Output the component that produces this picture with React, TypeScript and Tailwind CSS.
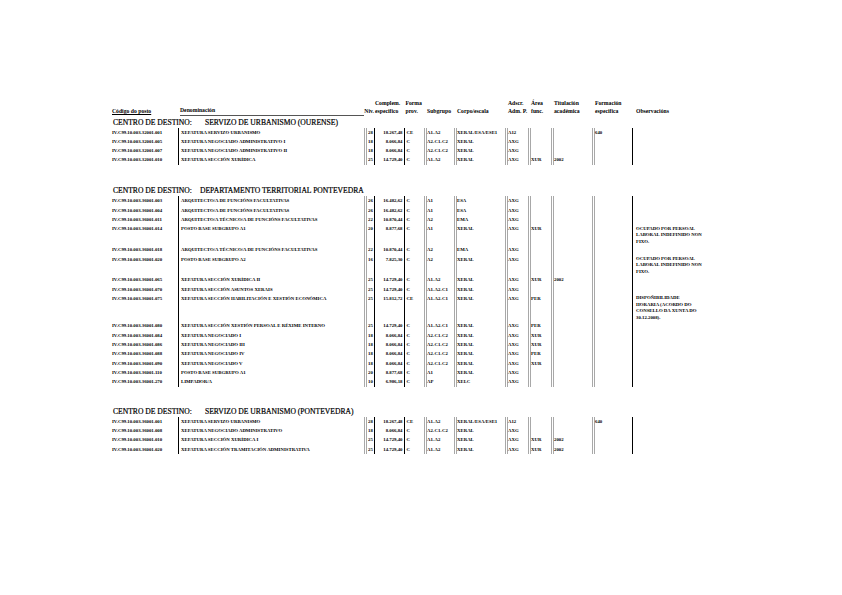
type Row = {
  code: string;
  name: string;
  niv: string;
  comp: string;
  forma: string;
  sub: string;
  corpo: string;
  adscr: string;
  area?: string;
  tit?: string;
  form?: string;
  obs?: string[];
};

type Section = { label: string; gap: string; rows: Row[] };

const OCUPADO = ["OCUPADO POR PERSOAL", "LABORAL INDEFINIDO NON", "FIXO."];

const sections: Section[] = [
  {
    label: "SERVIZO DE URBANISMO (OURENSE)",
    gap: "w-[92px]",
    rows: [
      { code: "IV.C99.10.003.32001.001", name: "XEFATURA SERVIZO URBANISMO", niv: "28", comp: "18.267,48", forma: "CE", sub: "A1-A2", corpo: "XERAL/ESA/ESE1", adscr: "A12", form: "640" },
      { code: "IV.C99.10.003.32001.005", name: "XEFATURA NEGOCIADO ADMINISTRATIVO I", niv: "18", comp: "8.066,84", forma: "C", sub: "A2-C1-C2", corpo: "XERAL", adscr: "AXG" },
      { code: "IV.C99.10.003.32001.007", name: "XEFATURA NEGOCIADO ADMINISTRATIVO II", niv: "18", comp: "8.066,84", forma: "C", sub: "A2-C1-C2", corpo: "XERAL", adscr: "AXG" },
      { code: "IV.C99.10.003.32001.010", name: "XEFATURA SECCIÓN XURÍDICA", niv: "25", comp: "14.729,40", forma: "C", sub: "A1-A2", corpo: "XERAL", adscr: "AXG", area: "XUR", tit: "2002" },
    ],
  },
  {
    label: "DEPARTAMENTO TERRITORIAL PONTEVEDRA",
    gap: "w-[87px]",
    rows: [
      { code: "IV.C99.10.003.36001.003", name: "ARQUITECTO/A DE FUNCIÓNS FACULTATIVAS", niv: "26", comp: "16.482,62", forma: "C", sub: "A1", corpo: "ESA", adscr: "AXG" },
      { code: "IV.C99.10.003.36001.004", name: "ARQUITECTO/A DE FUNCIÓNS FACULTATIVAS", niv: "26", comp: "16.482,62", forma: "C", sub: "A1", corpo: "ESA", adscr: "AXG" },
      { code: "IV.C99.10.003.36001.011", name: "ARQUITECTO/A TÉCNICO/A DE FUNCIÓNS FACULTATIVAS", niv: "22", comp: "10.870,44", forma: "C", sub: "A2", corpo: "EMA", adscr: "AXG" },
      { code: "IV.C99.10.003.36001.014", name: "POSTO BASE SUBGRUPO A1", niv: "20", comp: "8.877,68", forma: "C", sub: "A1", corpo: "XERAL", adscr: "AXG", area: "XUR", obs: OCUPADO },
      { code: "IV.C99.10.003.36001.018", name: "ARQUITECTO/A TÉCNICO/A DE FUNCIÓNS FACULTATIVAS", niv: "22", comp: "10.870,44", forma: "C", sub: "A2", corpo: "EMA", adscr: "AXG" },
      { code: "IV.C99.10.003.36001.020", name: "POSTO BASE SUBGRUPO A2", niv: "16", comp: "7.825,30", forma: "C", sub: "A2", corpo: "XERAL", adscr: "AXG", obs: OCUPADO },
      { code: "IV.C99.10.003.36001.065", name: "XEFATURA SECCIÓN XURÍDICA II", niv: "25", comp: "14.729,40", forma: "C", sub: "A1-A2", corpo: "XERAL", adscr: "AXG", area: "XUR", tit: "2002" },
      { code: "IV.C99.10.003.36001.070", name: "XEFATURA SECCIÓN ASUNTOS XERAIS", niv: "25", comp: "14.729,40", forma: "C", sub: "A1-A2-C1", corpo: "XERAL", adscr: "AXG" },
      { code: "IV.C99.10.003.36001.075", name: "XEFATURA SECCIÓN HABILITACIÓN E XESTIÓN ECONÓMICA", niv: "25", comp: "15.812,72", forma: "CE", sub: "A1-A2-C1", corpo: "XERAL", adscr: "AXG", area: "PER", obs: ["DISPOÑIBILIDADE", "HORARIA (ACORDO DO", "CONSELLO DA XUNTA DO", "30.12.2008)."] },
      { code: "IV.C99.10.003.36001.080", name: "XEFATURA SECCIÓN XESTIÓN PERSOAL E RÉXIME INTERNO", niv: "25", comp: "14.729,40", forma: "C", sub: "A1-A2-C1", corpo: "XERAL", adscr: "AXG", area: "PER" },
      { code: "IV.C99.10.003.36001.084", name: "XEFATURA NEGOCIADO I", niv: "18", comp: "8.066,84", forma: "C", sub: "A2-C1-C2", corpo: "XERAL", adscr: "AXG", area: "XUR" },
      { code: "IV.C99.10.003.36001.086", name: "XEFATURA NEGOCIADO III", niv: "18", comp: "8.066,84", forma: "C", sub: "A2-C1-C2", corpo: "XERAL", adscr: "AXG", area: "XUR" },
      { code: "IV.C99.10.003.36001.088", name: "XEFATURA NEGOCIADO IV", niv: "18", comp: "8.066,84", forma: "C", sub: "A2-C1-C2", corpo: "XERAL", adscr: "AXG", area: "PER" },
      { code: "IV.C99.10.003.36001.090", name: "XEFATURA NEGOCIADO V", niv: "18", comp: "8.066,84", forma: "C", sub: "A2-C1-C2", corpo: "XERAL", adscr: "AXG", area: "XUR" },
      { code: "IV.C99.10.003.36001.110", name: "POSTO BASE SUBGRUPO A1", niv: "20", comp: "8.877,68", forma: "C", sub: "A1", corpo: "XERAL", adscr: "AXG" },
      { code: "IV.C99.10.003.36001.270", name: "LIMPADOR/A", niv: "10", comp: "6.986,18", forma: "C", sub: "AP", corpo: "XELC", adscr: "AXG" },
    ],
  },
  {
    label: "SERVIZO DE URBANISMO (PONTEVEDRA)",
    gap: "w-[92px]",
    rows: [
      { code: "IV.C99.10.003.36001.001", name: "XEFATURA SERVIZO URBANISMO", niv: "28", comp: "18.267,48", forma: "CE", sub: "A1-A2", corpo: "XERAL/ESA/ESE1", adscr: "A12", form: "640" },
      { code: "IV.C99.10.003.36001.008", name: "XEFATURA NEGOCIADO ADMINISTRATIVO", niv: "18", comp: "8.066,84", forma: "C", sub: "A2-C1-C2", corpo: "XERAL", adscr: "AXG" },
      { code: "IV.C99.10.003.36001.010", name: "XEFATURA SECCIÓN XURÍDICA I", niv: "25", comp: "14.729,40", forma: "C", sub: "A1-A2", corpo: "XERAL", adscr: "AXG", area: "XUR", tit: "2002" },
      { code: "IV.C99.10.003.36001.020", name: "XEFATURA SECCIÓN TRAMITACIÓN ADMINISTRATIVA", niv: "25", comp: "14.729,40", forma: "C", sub: "A1-A2", corpo: "XERAL", adscr: "AXG", area: "XUR", tit: "2002" },
    ],
  },
];

function HeaderRow() {
  return (
    <div className="flex whitespace-nowrap text-[5.7px] font-bold leading-[8px]">
      <div className="flex w-[66px] shrink-0 flex-col">
        <span>&nbsp;</span>
        <span className="underline">Código do posto</span>
      </div>
      <div className="flex w-[186px] shrink-0 flex-col pl-[2px]">
        <span>&nbsp;</span>
        <span className="border-b border-[#555] leading-[7.5px]">Denominación</span>
      </div>
      <div className="flex w-[10px] shrink-0 flex-col items-end">
        <span>&nbsp;</span>
        <span>Niv.</span>
      </div>
      <div className="flex w-[30px] shrink-0 flex-col pl-[1px]">
        <span>Complem.</span>
        <span>especifico</span>
      </div>
      <div className="flex w-[20px] shrink-0 flex-col pl-[1.5px]">
        <span>Forma</span>
        <span>prov.</span>
      </div>
      <div className="flex w-[30px] shrink-0 flex-col pl-[3px]">
        <span>&nbsp;</span>
        <span>Subgrupo</span>
      </div>
      <div className="flex w-[51px] shrink-0 flex-col pl-[3px]">
        <span>&nbsp;</span>
        <span>Corpo/escala</span>
      </div>
      <div className="flex w-[23px] shrink-0 flex-col pl-[3px]">
        <span>Adscr.</span>
        <span>Adm. P.</span>
      </div>
      <div className="flex w-[23px] shrink-0 flex-col pl-[3px]">
        <span>Área</span>
        <span>func.</span>
      </div>
      <div className="flex w-[41px] shrink-0 flex-col pl-[3px]">
        <span>Titulación</span>
        <span>académica</span>
      </div>
      <div className="flex w-[40px] shrink-0 flex-col pl-[3px]">
        <span>Formación</span>
        <span>especifica</span>
      </div>
      <div className="flex w-[90px] shrink-0 flex-col pl-[4px]">
        <span>&nbsp;</span>
        <span>Observacións</span>
      </div>
    </div>
  );
}

function DataRow({ r }: { r: Row }) {
  return (
    <div className="flex min-h-[9.33px] whitespace-nowrap text-[4.8px] font-bold leading-[9.33px]">
      <div className="w-[66px] shrink-0">{r.code}</div>
      <div className="w-[186px] shrink-0 border-l border-black pl-[2px]">{r.name}</div>
      <div className="w-[10px] shrink-0 border-l-[3px] border-double border-[#a8a8a8] text-center">{r.niv}</div>
      <div className="w-[30px] shrink-0 border-l border-black pr-[1.5px] text-right">{r.comp}</div>
      <div className="w-[20px] shrink-0 border-l border-black pl-[1.5px]">{r.forma}</div>
      <div className="w-[30px] shrink-0 border-l-[3px] border-double border-[#a8a8a8]">{r.sub}</div>
      <div className="w-[51px] shrink-0 border-l-[3px] border-double border-[#a8a8a8]">{r.corpo}</div>
      <div className="w-[23px] shrink-0 border-l-[3px] border-double border-[#a8a8a8]">{r.adscr}</div>
      <div className="w-[23px] shrink-0 border-l-[3px] border-double border-[#a8a8a8]">{r.area}</div>
      <div className="w-[41px] shrink-0 border-l-[3px] border-double border-[#a8a8a8]">{r.tit}</div>
      <div className="w-[40px] shrink-0 border-l-[3px] border-double border-[#a8a8a8]">{r.form}</div>
      <div className="flex w-[90px] shrink-0 flex-col border-l border-black pl-[3px] pt-[1.4px] leading-[6.5px]">
        {r.obs?.map((line, i) => (
          <span key={i}>{line}</span>
        ))}
      </div>
    </div>
  );
}

export default function App() {
  return (
    <div className="h-[595px] w-[842px] overflow-hidden bg-white pl-[112px] pt-[99px] font-['Liberation_Serif',serif] text-black">
      <HeaderRow />
      {sections.map((s, i) => (
        <div key={i} className={i === 0 ? "mt-[2px]" : i === 1 ? "mt-[21.5px]" : "mt-[20px]"}>
          <div className="whitespace-nowrap pl-[1px] text-[7.6px] leading-[10px] [-webkit-text-stroke:0.2px_black]">
            <span className={`inline-block ${s.gap}`}>CENTRO DE DESTINO:</span>
            <span>{s.label}</span>
          </div>
          {s.rows.map((r) => (
            <DataRow key={r.code} r={r} />
          ))}
        </div>
      ))}
    </div>
  );
}
